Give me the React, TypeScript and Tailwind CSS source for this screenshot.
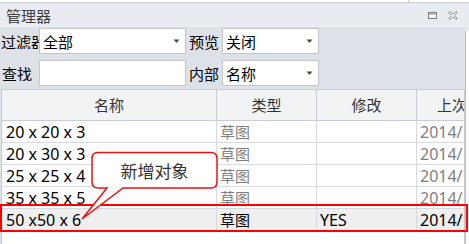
import React from "react";

const Arrow = () => (
  <svg width="7" height="5" viewBox="0 0 7 5" className="shrink-0">
    <polygon points="0.5,0.5 6.5,0.5 3.5,4" fill="#4a4a4a" />
  </svg>
);

function Select({ value, w }: { value: string; w: string }) {
  return (
    <div className={`${w} h-[26px] bg-white border border-[#c3c7cd] flex items-center pl-[3px] pr-[5px] justify-between`}>
      <span className="text-[15px] text-black leading-none">{value}</span>
      <Arrow />
    </div>
  );
}

const rows = [
  { n: "20 x 20 x 3", t: "草图", m: "", d: "2014/", sel: false },
  { n: "20 x 30 x 3", t: "草图", m: "", d: "2014/", sel: false },
  { n: "25 x 25 x 4", t: "草图", m: "", d: "2014/", sel: false },
  { n: "35 x 35 x 5", t: "草图", m: "", d: "2014/", sel: false },
  { n: "50 x50 x 6", t: "草图", m: "YES", d: "2014/", sel: true },
];

export default function App() {
  const cjk = "font-['Microsoft_YaHei','Noto_Sans_CJK_SC',sans-serif]";
  const lat = "font-['Noto_Sans','Noto_Sans_CJK_SC',sans-serif]";
  return (
    <div className={`w-[469px] h-[244px] overflow-hidden bg-[#e8ebef] relative ${cjk}`}>
      <div className="h-[3px] flex bg-white border-b border-[#c9cdd3]">
        <div className="w-[409px] border-r border-[#c9cdd3]" />
      </div>
      <div className="h-[24px] flex items-center pl-[6px] pr-[11px] justify-between">
        <span className="text-[15px] text-[#3d3d3d] leading-none">管理器</span>
        <div className="flex items-center gap-[11px]">
          <svg width="9" height="7" viewBox="0 0 9 7">
            <rect x="0.5" y="0.5" width="8" height="6" fill="white" stroke="#7d7d7d" />
            <line x1="1" y1="2" x2="8" y2="2" stroke="#7d7d7d" />
          </svg>
          <svg width="10" height="9" viewBox="0 0 10 9">
            <polygon
              points="0.5,1.5 1.5,0.5 5,3 8.5,0.5 9.5,1.5 6.5,4.5 9.5,7.5 8.5,8.5 5,6 1.5,8.5 0.5,7.5 3.5,4.5"
              fill="white"
              stroke="#8a8a8a"
              strokeWidth="1"
            />
          </svg>
        </div>
      </div>
      <div className="flex h-[217px]">
        <div className="w-[465px] bg-[#dde1e8] pt-[1px] flex flex-col">
          <div className="flex items-center h-[26px]">
            <div className="w-[39px] overflow-hidden whitespace-nowrap pl-[1px] text-[15px] text-black leading-none">过滤器</div>
            <Select value="全部" w="w-[147px]" />
            <div className="w-[36px] pl-[3px] text-[15px] text-black leading-none">预览</div>
            <Select value="关闭" w="w-[97px]" />
          </div>
          <div className="flex items-center h-[26px] mt-[6px]">
            <div className="w-[39px] overflow-hidden whitespace-nowrap pl-[2px] text-[15px] text-black leading-none">查找</div>
            <div className="w-[147px] h-[26px] bg-white border border-[#c3c7cd]" />
            <div className="w-[36px] pl-[3px] text-[15px] text-black leading-none">内部</div>
            <Select value="名称" w="w-[97px]" />
          </div>
          <div className="mt-[3px] ml-[1px] w-[464px] flex-1 bg-white border-l border-t border-r border-[#c5cad1] overflow-hidden">
            <div className="flex h-[31px] bg-[#f2f3f5] border-b border-[#c9cdd3] text-[15px] text-[#333]">
              <div className="w-[215px] shrink-0 border-r border-[#c9cdd3] flex items-center justify-center">名称</div>
              <div className="w-[100px] shrink-0 border-r border-[#c9cdd3] flex items-center justify-center">类型</div>
              <div className="w-[100px] shrink-0 border-r border-[#c9cdd3] flex items-center justify-center">修改</div>
              <div className="w-[70px] shrink-0 flex items-center justify-center">上次</div>
            </div>
            {rows.map((r, i) => (
              <div
                key={i}
                className={`flex h-[22px] border-b border-[#d6d9de] text-[16px] leading-none ${r.sel ? "bg-[#efefef]" : ""}`}
              >
                <div className={`w-[215px] shrink-0 border-r border-[#d6d9de] flex items-center pl-[4px] text-black ${lat}`}>{r.n}</div>
                <div className={`w-[100px] shrink-0 border-r border-[#d6d9de] flex items-center pl-[3px] text-[15px] ${r.sel ? "text-black" : "text-[#7f7f7f]"}`}>{r.t}</div>
                <div className={`w-[100px] shrink-0 border-r border-[#d6d9de] flex items-center pl-[3px] text-black ${lat}`}>{r.m}</div>
                <div className={`w-[70px] shrink-0 flex items-center pl-[3px] ${lat} ${r.sel ? "text-black" : "text-[#7f7f7f]"}`}>{r.d}</div>
              </div>
            ))}
          </div>
        </div>
        <div className="flex-1 pt-[4px]">
          <div className="h-full border-l border-[#b9bec6] bg-white" />
        </div>
      </div>

      <div className="absolute left-0 top-[204px] w-[468px] h-[28px] border-2 border-[#ff0000]" />

      <svg className="absolute left-0 top-0 pointer-events-none" width="469" height="244" viewBox="0 0 469 244">
        <path
          d="M 98 152.5 H 211 Q 217 152.5 217 158.5 V 182 Q 217 188 211 188 H 123 L 82 219 L 107 188 H 98 Q 92 188 92 182 V 158.5 Q 92 152.5 98 152.5 Z"
          fill="white"
          stroke="#ee1111"
          strokeWidth="1.5"
        />
      </svg>
      <div className="absolute left-[92px] top-[152px] w-[125px] h-[36px] flex items-center justify-center text-[17px] text-[#333] leading-none">
        新增对象
      </div>
    </div>
  );
}
